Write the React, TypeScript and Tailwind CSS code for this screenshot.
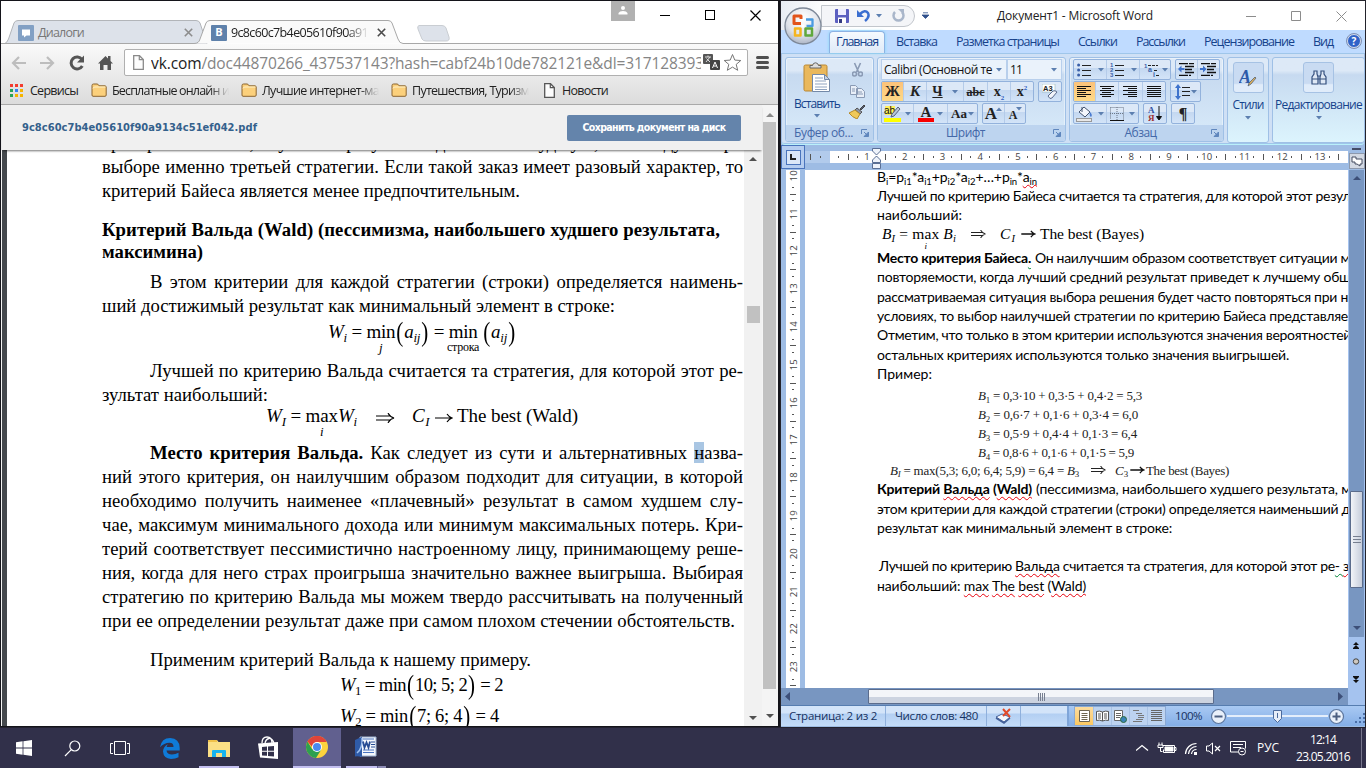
import { useLayoutEffect, useRef, type ReactNode } from "react";

const UI = "font-['Open_Sans','Noto_Sans',sans-serif]";
const SERIF = "font-['Liberation_Serif',serif]";

/** Text whose tracking is computed so that it fills the given width. */
function Fit({ w, className = "", children }: { w: number; className?: string; children: ReactNode }) {
  const ref = useRef<HTMLSpanElement>(null);
  useLayoutEffect(() => {
    const el = ref.current;
    if (!el) return;
    el.style.letterSpacing = "0px";
    const base = el.getBoundingClientRect().width;
    el.style.letterSpacing = "1px";
    const wide = el.getBoundingClientRect().width;
    el.style.letterSpacing = `${((w - base) / (wide - base || 1)).toFixed(4)}px`;
  }, [w]);
  return (
    <span ref={ref} className={`inline-block shrink-0 whitespace-pre ${className}`}>
      {children}
    </span>
  );
}

const I = ({ children }: { children: ReactNode }) => <i className="italic">{children}</i>;
const Sub = ({ children }: { children: ReactNode }) => (
  <span className="relative top-[0.28em] text-[0.68em] leading-none">{children}</span>
);

function Under({ top, children, className = "" }: { top: string; children: ReactNode; className?: string }) {
  return (
    <span className="inline-flex flex-col items-center leading-none">
      <span>{top}</span>
      <span className={`h-0 leading-none ${className}`}>{children}</span>
    </span>
  );
}

const Paren = ({ children }: { children: ReactNode }) => (
  <span className="relative top-[3px] inline-block scale-x-75 text-[28px] leading-none">{children}</span>
);

/* ---------------------------------------------------------------- browser */

function Folder() {
  return (
    <svg width="16" height="14" viewBox="0 0 16 14" className="shrink-0">
      <path d="M1 12V2.5Q1 1 2.5 1H6q1 0 1.5 1l.5.8h6Q15.200 3 15.200 4v8q0 1.300-1.200 1.300H2Q1 13.300 1 12z" fill="#fbd07c" stroke="#8b6531" />
      <path d="M2 5.500Q2 4 4 4h10.500" stroke="#fff1c8" fill="none" />
    </svg>
  );
}

function PageIcon({ className = "" }: { className?: string }) {
  return (
    <svg width="11" height="15" viewBox="0 0 11 15" className={`shrink-0 ${className}`}>
      <path d="M.7.7h5.800l3.800 3.800v9.800H.7z" fill="#fdfdfd" stroke="currentColor" strokeWidth="1.300" />
      <path d="M6.300.7v4h4" fill="none" stroke="currentColor" strokeWidth="1.200" />
    </svg>
  );
}

function Cross({ className }: { className: string }) {
  return (
    <svg width="9" height="9" viewBox="0 0 9 9" className={`shrink-0 ${className}`}>
      <path d="M.8.8l7.400 7.400M8.200.8L.8 8.200" stroke="currentColor" strokeWidth="1.600" />
    </svg>
  );
}

function TabStrip() {
  return (
    <div className="relative flex h-[43px] items-end bg-white">
      <svg className="absolute left-0 top-0" width="777" height="43" viewBox="0 0 777 43">
        <path d="M3 43Q6 42 7.500 38L13 22q1-2.500 4-2.500h178q3 0 4 2.500l7 21z" fill="#dde2ea" stroke="#b2b5b9" />
        <path d="M0 42.500h193Q198 42.500 199 38L205 22q1-2.500 4-2.500h178q3 0 4 2.500l6 16q1.500 4.500 5 4.500h380" fill="#fafafa" stroke="#a8a8a8" />
        <path d="M418 24.500h23q3 0 4 2.500l3 9q1 4-3 4h-20q-3 0-4-2l-4-10q-1-3 1-3.500z" fill="#dde2ea" stroke="#c9cdd2" />
      </svg>
      <div className="relative mb-px flex h-[21px] w-full items-center">
        <svg className="ml-[17px]" width="16" height="16" viewBox="0 0 16 16">
          <rect width="16" height="16" rx="1" fill="#82a0c4" />
          <path d="M4 4.500h8v6H8.500L6 12.500v-2H4z" fill="#fff" />
        </svg>
        <div className="ml-1 flex w-[146px]">
          <Fit w={46} className={`${UI} text-[12.500px] leading-[17px] text-[#777]`}>Диалоги</Fit>
        </div>
        <Cross className="text-[#8c8c8c]" />
        <div className="ml-[18px] flex h-4 w-4 items-center justify-center rounded-[1px] bg-[#5e81ab] font-['Open_Sans',sans-serif] text-[11px] font-bold text-white">В</div>
        <div className="ml-1 flex w-[138px] overflow-hidden [mask-image:linear-gradient(to_right,black_84%,transparent)]">
          <Fit w={137} className={`${UI} text-[12.500px] leading-[17px] text-[#222]`}>9c8c60c7b4e05610f90a91</Fit>
        </div>
        <Cross className="ml-[8px] text-[#4a4a4a]" />
      </div>
      <div className="absolute right-0 top-0 flex h-[29px] items-start">
        <div className="flex h-5 w-6 justify-center bg-[#b1b1b1] pt-[5px]">
          <svg width="10" height="9" viewBox="0 0 10 9" fill="#fff"><circle cx="5" cy="2" r="2" /><path d="M.5 8.500V7Q1.500 5 5 5t4.500 2v1.500z" /></svg>
        </div>
        <svg className="mt-2 ml-[25px] mr-[17px]" width="101" height="13" viewBox="0 0 101 13" fill="none" stroke="#000" shapeRendering="crispEdges">
          <path d="M0 6.500h10M45.500 1.500h9v9h-9z" />
          <path d="M90.500 1.500l10 10M100.500 1.500l-10 10" shapeRendering="auto" strokeWidth="1.200" />
        </svg>
      </div>
    </div>
  );
}

function Toolbar() {
  return (
    <div className="h-[61px] border-b border-[#a9a9a9] bg-linear-to-b from-[#fafafa] to-[#dcdcdc]">
      <div className="flex h-[37px] items-center">
        <svg className="ml-[10px]" width="104" height="18" viewBox="0 0 104 18" fill="none">
          <path d="M15 9H2m6-6L2 9l6 6" stroke="#bdbdbd" strokeWidth="2.200" />
          <path d="M29 9h13m-6-6l6 6-6 6" stroke="#bdbdbd" strokeWidth="2.200" />
          <path d="M71 5.500A6 6 0 1 0 71.300 12" stroke="#555" strokeWidth="3" />
          <path d="M73 1.500v7h-7z" fill="#555" />
          <path d="M87 9.500L94.500 2l2.500 2.500V2h2.500v5l2.500 2.500h-2V16h-3.500v-5h-4v5H89V9.500z" fill="#555" />
        </svg>
        <div className="ml-[9px] flex h-[27px] w-[624px] items-center rounded-[2px] border border-[#b0b0b0] bg-white">
          <PageIcon className="ml-[8px] text-[#8a8a8a]" />
          <div className="ml-[7px] flex w-[550px] overflow-hidden">
            <Fit w={553} className={`${UI} text-[15.500px] leading-[22px] text-[#858585]`}>
              <span className="text-[#222]">vk.com</span>/doc44870266_437537143?hash=cabf24b10de782121e&amp;dl=317128393
            </Fit>
          </div>
          <svg className="ml-[2px] shrink-0" width="17" height="17" viewBox="0 0 17 17">
            <rect width="10" height="10" rx="1" fill="#555" />
            <path d="M2 3h6M5 1.500V3M3 8l4-5M3.500 4.500L7 8" stroke="#ddd" fill="none" />
            <rect x="7" y="6" width="10" height="10" rx="1" fill="#444" />
            <path d="M9.500 14l2.500-6 2.500 6M10.500 12h3" stroke="#fff" fill="none" />
          </svg>
          <svg className="ml-[3px] shrink-0" width="19" height="19" viewBox="0 0 19 19">
            <path d="M9.500 1.500l2.300 5.600 6 .4-4.600 3.900 1.500 5.900-5.200-3.200-5.200 3.200 1.500-5.900L1.200 7.500l6-.4z" fill="#fff" stroke="#777" />
          </svg>
        </div>
        <div className="ml-[8px] flex flex-col gap-[2px]">
          <div className="h-[3px] w-[13px] rounded-sm bg-[#4f4f4f]" />
          <div className="h-[3px] w-[13px] rounded-sm bg-[#4f4f4f]" />
          <div className="h-[3px] w-[13px] rounded-sm bg-[#4f4f4f]" />
        </div>
      </div>
      <div className={`${UI} flex h-[18px] items-center text-[12.500px] leading-[17px] text-[#222]`}>
        <div className="ml-[9px] grid grid-cols-3 gap-[2px]">
          {["bg-[#f33c2f]", "bg-[#f33c2f]", "bg-[#f33c2f]", "bg-[#27a35a]", "bg-[#3384f5]", "bg-[#f5b400]", "bg-[#27a35a]", "bg-[#f5b400]", "bg-[#f5b400]"].map((c, i) => (
            <div key={i} className={`h-[3px] w-[3px] ${c}`} />
          ))}
        </div>
        <Fit w={48} className="ml-[7px] mr-[13px]">Сервисы</Fit>
        {[["Бесплатные онлайн и", 117], ["Лучшие интернет-ма", 117], ["Путешествия, Туризм", 117]].map(([t, w]) => (
          <div key={t} className="flex w-[150px] items-center gap-[5px]">
            <Folder />
            <div className="flex [mask-image:linear-gradient(to_right,black_84%,transparent)]"><Fit w={w as number}>{t}</Fit></div>
          </div>
        ))}
        <PageIcon className="ml-[3px] text-[#555]" />
        <Fit w={46} className="ml-[7px]">Новости</Fit>
      </div>
    </div>
  );
}

function J({ children, indent = false, h = "h-6" }: { children: ReactNode; indent?: boolean; h?: string }) {
  return (
    <div className={`${h} w-[641px] whitespace-nowrap leading-6 [text-align-last:justify] ${indent ? "pl-12" : ""}`}>{children}</div>
  );
}

function PdfPage() {
  return (
    <div className={`${SERIF} -mt-[19px] w-[737px] pl-[95px] text-[18.700px] text-black`}>
      <J>критерию Байеса, лучший результат даст нам худшую, и следует при</J>
      <J>выборе именно третьей стратегии. Если такой заказ имеет разовый характер, то</J>
      <div className="h-6 leading-6"><Fit w={418}>критерий Байеса является менее предпочтительным.</Fit></div>
      <div className="mt-[15px] h-[23px] font-bold leading-[23px]"><Fit w={618}>Критерий Вальда (Wald) (пессимизма, наибольшего худшего результата,</Fit></div>
      <div className="h-[22px] font-bold leading-[22px]"><Fit w={101}>максимина)</Fit></div>
      <div className="h-[7px]" />
      <J indent>В этом критерии для каждой стратегии (строки) определяется наимень-</J>
      <div className="h-6 leading-6"><Fit w={513}>ший достижимый результат как минимальный элемент в строке:</Fit></div>
      <div className="-mt-1 mb-1 h-[41px] pl-[226px] pt-[1px] text-[19px] leading-[26px]">
        <Fit w={188}>
          <I>W</I><Sub><I>i</I></Sub> = <Under top="min" className="text-[13px] italic">j</Under><Paren>(</Paren><I>a</I><Sub><I>ij</I></Sub><Paren>)</Paren> = <Under top="min" className="-mx-1 text-[12px]">строка</Under> <Paren>(</Paren><I>a</I><Sub><I>ij</I></Sub><Paren>)</Paren>
        </Fit>
      </div>
      <J indent>Лучшей по критерию Вальда считается та стратегия, для которой этот ре-</J>
      <div className="h-[23px] leading-6"><Fit w={166}>зультат наибольший:</Fit></div>
      <div className="flex h-[35px] pl-[164px] text-[19px] leading-[20px]">
        <Fit w={91}><I>W</I><Sub><I>I</I></Sub> = <Under top="max" className="text-[13px] italic">i</Under><I>W</I><Sub><I>i</I></Sub></Fit>
        <svg className="ml-[19px] mt-[7px]" width="20" height="10" viewBox="0 0 20 10" fill="none" stroke="#000" strokeWidth="1.100"><path d="M0 3h15M0 7h15M12 0q2 4 6 5-4 1-6 5" /></svg>
        <Fit w={18} className="ml-[16px]"><I>C</I><Sub><I>I</I></Sub></Fit>
        <svg className="ml-[5px] mt-[7px]" width="18" height="10" viewBox="0 0 18 10" fill="none" stroke="#000" strokeWidth="1.200"><path d="M0 5h16M12 1q2 3 5 4-3 1-5 4" /></svg>
        <Fit w={121} className="ml-[4px]">The best (Wald)</Fit>
      </div>
      <J indent><b>Место критерия Вальда.</b> Как следует из сути и альтернативных <span className="bg-[#a9c6e3]">н</span>азва-</J>
      <J>ний этого критерия, он наилучшим образом подходит для ситуации, в которой</J>
      <J>необходимо получить наименее «плачевный» результат в самом худшем слу-</J>
      <J>чае, максимум минимального дохода или минимум максимальных потерь. Кри-</J>
      <J>терий соответствует пессимистично настроенному лицу, принимающему реше-</J>
      <J>ния, когда для него страх проигрыша значительно важнее выигрыша. Выбирая</J>
      <J>стратегию по критерию Вальда мы можем твердо рассчитывать на полученный</J>
      <div className="h-6 leading-6"><Fit w={633}>при ее определении результат даже при самом плохом стечении обстоятельств.</Fit></div>
      <div className="mt-[15px] h-6 pl-12 leading-6"><Fit w={381}>Применим критерий Вальда к нашему примеру.</Fit></div>
      <div className="-mt-1 h-[31px] pl-[238px] text-[18.500px] leading-[26px]">
        <Fit w={163}><I>W</I><Sub>1</Sub> = min<Paren>(</Paren>10; 5; 2<Paren>)</Paren> = 2</Fit>
      </div>
      <div className="h-[26px] pl-[238px] text-[18.500px] leading-[26px]">
        <Fit w={159}><I>W</I><Sub>2</Sub> = min<Paren>(</Paren>7; 6; 4<Paren>)</Paren> = 4</Fit>
      </div>
    </div>
  );
}

const Tri = ({ className }: { className: string }) => (
  <svg width="8" height="4" viewBox="0 0 8 4" className={className}><path d="M0 4l4-4 4 4z" fill="currentColor" /></svg>
);

function Browser() {
  return (
    <div className="flex h-[727px] w-[780px] flex-col border-b border-l border-r-2 border-t border-[#14141a] bg-[#f4f4f4]">
      <TabStrip />
      <Toolbar />
      <div className="ml-px flex h-[621px] shrink-0">
        <div className="w-[760px]">
          <div className="relative flex h-[45px] items-center justify-between bg-[#f0f0f0] pl-5 pr-[21px] shadow-[0_2px_2px_-1px_rgba(0,0,0,0.55)]">
            <Fit w={235} className="mt-[2px] font-['DejaVu_Sans_Condensed','DejaVu_Sans',sans-serif] text-[11px] font-bold text-[#34618c]">9c8c60c7b4e05610f90a9134c51ef042.pdf</Fit>
            <div className="flex h-[26px] w-[174px] items-center justify-center rounded-[2px] bg-[#6484ab]">
              <Fit w={143} className="font-['DejaVu_Sans_Condensed','DejaVu_Sans',sans-serif] text-[10.500px] font-bold text-white">Сохранить документ на диск</Fit>
            </div>
          </div>
          <div className="flex h-[576px] overflow-hidden bg-white">
            <div className="w-[5px] shrink-0 bg-[#45494d]" />
            <div className="h-[576px] overflow-hidden"><PdfPage /></div>
            <div className="flex w-[18px] shrink-0 flex-col items-center bg-[#f1f1f1]">
              <Tri className="mt-[7px] text-[#505050]" />
              <div className="mt-[145px] h-[17px] w-[13px] bg-[#c1c1c1]" />
              <Tri className="mt-auto mb-[6px] rotate-180 text-[#505050]" />
            </div>
          </div>
        </div>
        <div className="ml-[1px] flex w-[13px] flex-col items-center">
          <Tri className="mt-[8px] text-[#8a8a8a]" />
          <div className="mt-[5px] h-[567px] w-[13px] bg-[#c1c1c1]" />
          <Tri className="mt-auto mb-[8px] rotate-180 text-[#505050]" />
        </div>
      </div>
    </div>
  );
}

/* ------------------------------------------------------------------- word */

function Drop({ className = "" }: { className?: string }) {
  return <svg width="6" height="4" viewBox="0 0 6 4" className={`shrink-0 ${className}`}><path d="M0 0h6L3 3.500z" fill="#5c7fb0" /></svg>;
}

function Box({ w, children }: { w: string; children: ReactNode }) {
  return (
    <div className={`flex h-[21px] ${w} overflow-hidden rounded-[2px] border border-[#93b2dc] bg-linear-to-b from-[#dce8f7] from-40% via-[#c3d7f0] via-41% to-[#d3e4f8]`}>{children}</div>
  );
}

function Btn({ w, on = false, children }: { w: string; on?: boolean; children: ReactNode }) {
  return (
    <div className={`flex ${w} shrink-0 items-center justify-center gap-[3px] border-r border-[#b4cbe9] last:border-r-0 ${on ? "bg-linear-to-b from-[#fcc27a] to-[#fdd987]" : ""}`}>{children}</div>
  );
}

function Group({ w, label, labelW, children }: { w: string; label: string; labelW: number; children: ReactNode }) {
  return (
    <div className={`flex h-[85px] ${w} shrink-0 flex-col overflow-hidden rounded-[3px] border border-[#9fc0e6] bg-linear-to-b from-[#dde9f7] from-15% via-[#c7daf0] via-20% to-[#d9ebfa] shadow-[inset_0_0_0_1px_rgba(255,255,255,0.4)]`}>
      <div className="h-[68px]">{children}</div>
      <div className={`${UI} flex h-4 items-center justify-center bg-[#bdd4ef] text-[12px] text-[#4468a8]`}>
        <div className="flex flex-1 justify-center leading-4"><Fit w={labelW}>{label}</Fit></div>
        <svg className="mr-1" width="8" height="8" viewBox="0 0 8 8" fill="none" stroke="#5f86bd"><path d="M.5 5V.5H6M3 3l3 3" /><path d="M7.500 3v4.500H3z" fill="#5f86bd" /></svg>
      </div>
    </div>
  );
}

const glyph = "font-['Liberation_Serif',serif] font-bold leading-none text-[#222]";

function Lines({ kind }: { kind: "left" | "center" | "right" | "full" }) {
  const rows = [14, 9, 14, 9, 14, 9];
  return (
    <svg width="15" height="12" viewBox="0 0 15 12" shapeRendering="crispEdges">
      {rows.map((r, i) => {
        const len = kind === "full" ? 14 : r;
        const start = kind === "center" ? Math.floor((14 - len) / 2) : kind === "right" ? 14 - len : 0;
        return <rect key={i} x={start} y={i * 2} width={len} height="1" fill="#111" />;
      })}
    </svg>
  );
}

function ListIcon({ kind }: { kind: "dots" | "nums" | "tree" }) {
  return (
    <svg width="15" height="14" viewBox="0 0 15 14">
      {kind === "dots" && [2, 7, 12].map((y) => <circle key={y} cx="1.600" cy={y} r="1.500" fill="#3a5fa8" />)}
      {kind === "nums" && [2, 7, 12].map((y, i) => <text key={y} x="0" y={y + 2} fontSize="6" fontWeight="bold" fill="#3a5fa8" fontFamily="Liberation Sans">{i + 1}</text>)}
      {kind !== "tree" && <path d="M5 2.500h9M5 7.500h9M5 12.500h9" stroke="#222" />}
      {kind === "tree" && (
        <>
          <text x="0" y="5" fontSize="6" fontWeight="bold" fill="#3a5fa8" fontFamily="Liberation Sans">1</text>
          <text x="4" y="9" fontSize="7" fontWeight="bold" fill="#3a5fa8" fontFamily="Liberation Sans">a</text>
          <text x="9" y="14" fontSize="7" fontWeight="bold" fill="#3a5fa8" fontFamily="Liberation Sans">i</text>
          <path d="M4 2.500h10M10 7.500h4M12 12.500h3" stroke="#222" strokeDasharray="3 1" />
        </>
      )}
    </svg>
  );
}

function IndentIcon({ right = false }: { right?: boolean }) {
  return (
    <svg width="17" height="13" viewBox="0 0 17 13">
      <path d="M1 .5h15M7 3.500h9M7 6.500h7M7 9.500h9M1 12.500h12" stroke="#111" strokeWidth="1.400" strokeDasharray="9 1" />
      <path d={right ? "M0 5h3V2.500L6.500 6 3 9.500V7H0z" : "M6.500 5h-3V2.500L0 6l3.500 3.500V7h3z"} fill="#3f73cc" />
    </svg>
  );
}

function Ribbon() {
  return (
    <div className="mx-[1px] flex h-[91px] gap-[3px] rounded-b-[3px] border-b border-t border-[#9fc6ea] bg-[#cfe0f5] pl-[3px] pt-[3px] shadow-[0_1px_0_#b9f0fa]">
      <Group w="w-[89px]" label="Буфер об..." labelW={59}>
        <div className="flex justify-between px-[8px] pt-[4px]">
          <div className="flex flex-col items-center">
            <svg width="28" height="31" viewBox="0 0 28 31">
              <rect x="1" y="3" width="23" height="26" rx="1.500" fill="#eab85c" stroke="#b98732" />
              <path d="M7 6V3.500h2.500Q10 .8 12.500 .8T15.500 3.500H18V6z" fill="#ddd" stroke="#666" />
              <path d="M9.500 12.500h12l5 5v12h-17z" fill="#fff" stroke="#7389a8" />
              <path d="M12 16h8M12 19h11M12 22h12M12 25h12M12 27.500h12" stroke="#8fa3c0" />
              <path d="M21.500 12.500v5h5z" fill="#c9d6e8" stroke="#7389a8" />
            </svg>
            <Fit w={46} className={`${UI} mt-[2px] text-[12px] leading-[17px] text-[#15428b]`}>Вставить</Fit>
            <Drop className="mt-[2px]" />
          </div>
          <div className="flex flex-col items-center gap-[7px]">
            <svg width="11" height="16" viewBox="0 0 11 16" fill="none" stroke="#8a9ab4" strokeWidth="1.600"><path d="M2.500 1l4 9M8.500 1l-4 9" /><circle cx="2.500" cy="12" r="2" /><circle cx="8.500" cy="12" r="2" /></svg>
            <svg width="15" height="13" viewBox="0 0 15 13" fill="#e9eff8" stroke="#8a9ab4"><path d="M.5.5h5l2 2v7h-7zM6.500 3.500h5l3 3v6h-8z" /><path d="M8 7h4M8 9h5M2 4h3M2 6h3" /></svg>
            <svg width="16" height="14" viewBox="0 0 16 14"><path d="M15 0l-4 4 1 1 4-4z" fill="#55607a" stroke="#444" /><path d="M8 3l5 4-2 2-5-4z" fill="#8d96a8" stroke="#555" /><path d="M6 5l5 4-3 5Q3 12 0 8z" fill="#f0c95a" stroke="#b58a28" /></svg>
          </div>
        </div>
      </Group>

      <Group w="w-[189px]" label="Шрифт" labelW={39}>
        <div className="flex flex-col gap-[1px] px-[3px] pt-[1px]">
          <div className={`${UI} flex h-[21px] text-[12px] text-[#111]`}>
            <div className="flex w-[126px] items-center justify-between border border-[#b8cfec] bg-[#eaf2fb] pl-[2px] pr-1"><Fit w={108}>Calibri (Основной те</Fit><Drop /></div>
            <div className="flex w-[55px] items-center justify-between border border-[#b8cfec] bg-[#eaf2fb] pl-[2px] pr-1"><Fit w={12}>11</Fit><Drop /></div>
          </div>
          <div className="flex gap-1">
            <Box w="w-[153px]">
              <Btn w="w-[22px]" on><span className={`${glyph} text-[15px]`}>Ж</span></Btn>
              <Btn w="w-[23px]"><span className={`${glyph} text-[15px] italic`}>К</span></Btn>
              <Btn w="w-[37px]"><span className={`${glyph} mr-[6px] text-[14px] underline`}>Ч</span><Drop /></Btn>
              <Btn w="w-[24px]"><span className={`${glyph} text-[12px] line-through`}>abc</span></Btn>
              <Btn w="w-[23px]"><span className={`${glyph} text-[14px]`}>x<span className="relative top-1 text-[7px] text-[#2f5fc0]">2</span></span></Btn>
              <Btn w="w-[22px]"><span className={`${glyph} text-[14px]`}>x<span className="relative -top-[6px] text-[7px] text-[#2f5fc0]">2</span></span></Btn>
            </Box>
            <Box w="w-[24px]">
              <Btn w="w-[22px]">
                <svg width="16" height="16" viewBox="0 0 16 16"><rect x="0" y="0" width="13" height="8" fill="#fff" stroke="#8aa" strokeWidth=".5" /><text x="1" y="7" fontSize="7.500" fontWeight="bold" fontFamily="Liberation Sans" fill="#222">A3</text><path d="M6 12l5-5q2-1 4 1l-5 6q-2 2-4-2z" fill="#f2f4fa" stroke="#5a6b8c" /></svg>
              </Btn>
            </Box>
          </div>
          <div className="flex gap-1">
            <Box w="w-[97px]">
              <Btn w="w-[32px]">
                <svg width="18" height="17" viewBox="0 0 18 17"><rect x="1" y="1" width="10" height="9" fill="#ffef5a" /><text x="0" y="9" fontSize="10" fontFamily="Liberation Sans" fill="#111">ab</text><path d="M14 2l2 2-6 7-3 1 1-3z" fill="#b8c4d8" stroke="#55627a" /><rect x="0" y="13" width="17" height="4" fill="#ffff00" /></svg>
                <Drop />
              </Btn>
              <Btn w="w-[34px]">
                <div className="flex flex-col items-center"><span className={`${glyph} h-[13px] text-[15px] text-[#3c5f9f]`}>A</span><div className="h-1 w-4 bg-[#f80000]" /></div>
                <Drop />
              </Btn>
              <Btn w="w-[29px]"><span className={`${glyph} text-[13px]`}>Aa</span><Drop className="-ml-[2px]" /></Btn>
            </Box>
            <Box w="w-[44px]">
              <Btn w="w-[22px]"><span className={`${glyph} text-[17px]`}>A</span><Drop className="-ml-[4px] -mt-[10px] rotate-180" /></Btn>
              <Btn w="w-[21px]"><span className={`${glyph} mt-[3px] text-[12px]`}>A</span><Drop className="-ml-[4px] -mt-[10px]" /></Btn>
            </Box>
          </div>
        </div>
      </Group>

      <Group w="w-[155px]" label="Абзац" labelW={32}>
        <div className="flex flex-col gap-[1px] px-[3px] pt-[1px]">
          <div className="flex gap-1">
            <Box w="w-[99px]">
              <Btn w="w-[33px]"><ListIcon kind="dots" /><Drop className="ml-[3px]" /></Btn>
              <Btn w="w-[33px]"><ListIcon kind="nums" /><Drop className="ml-[3px]" /></Btn>
              <Btn w="w-[31px]"><ListIcon kind="tree" /><Drop /></Btn>
            </Box>
            <Box w="w-[45px]">
              <Btn w="w-[22px]"><IndentIcon /></Btn>
              <Btn w="w-[21px]"><IndentIcon right /></Btn>
            </Box>
          </div>
          <div className="flex gap-[4px]">
            <Box w="w-[93px]">
              <Btn w="w-[22px]" on><Lines kind="left" /></Btn>
              <Btn w="w-[23px]"><Lines kind="center" /></Btn>
              <Btn w="w-[24px]"><Lines kind="right" /></Btn>
              <Btn w="w-[22px]"><Lines kind="full" /></Btn>
            </Box>
            <Box w="w-[31px]">
              <Btn w="w-[29px]">
                <svg width="15" height="16" viewBox="0 0 15 16"><path d="M3 0l3 4H4v8h2l-3 4-3-4h2V4H0z" fill="#3f73cc" /><path d="M7 3.500h8M7 7.500h8M7 11.500h8" stroke="#222" /></svg>
                <Drop className="-ml-[2px]" />
              </Btn>
            </Box>
          </div>
          <div className="flex gap-[4px]">
            <Box w="w-[66px]">
              <Btn w="w-[33px]">
                <svg width="17" height="16" viewBox="0 0 17 16"><path d="M3 6l5-5 6 5-5 5z" fill="#f4f7fc" stroke="#44546f" /><path d="M14 6q3 3 1 5-2-1-1-5z" fill="#4a7bd0" /><path d="M6 6V1" stroke="#44546f" /><rect x=".5" y="12.500" width="15" height="3" fill="#e8e8e8" stroke="#999" /></svg>
                <Drop className="ml-[2px]" />
              </Btn>
              <Btn w="w-[31px]">
                <svg width="14" height="14" viewBox="0 0 14 14" stroke="#6c7787" fill="none"><path d="M.5.5h13v12M.5.5v12M7 0v13M0 6.500h13" strokeDasharray="1 1" /><path d="M0 13.500h14" stroke="#111" /></svg>
                <Drop className="ml-[2px]" />
              </Btn>
            </Box>
            <Box w="w-[24px]">
              <Btn w="w-[22px]">
                <svg width="15" height="17" viewBox="0 0 15 17"><text x="0" y="8" fontSize="9" fontWeight="bold" fontFamily="Liberation Serif" fill="#2f4fa0">А</text><text x="0" y="16" fontSize="9" fontWeight="bold" fontFamily="Liberation Serif" fill="#a03030">Я</text><path d="M11 1v13M8.500 11.500L11 15l2.500-3.500z" stroke="#111" fill="#111" /></svg>
              </Btn>
            </Box>
            <Box w="w-[24px]"><Btn w="w-[22px]"><span className={`${glyph} text-[16px]`}>¶</span></Btn></Box>
          </div>
        </div>
      </Group>

      {[
        { label: "Стили", w: 31, cls: "w-[42px]", icon: "style" },
        { label: "Редактирование", w: 87, cls: "w-[93px]", icon: "find" },
      ].map((g) => (
        <div key={g.label} className={`flex h-[86px] ${g.cls} shrink-0 flex-col items-center rounded-[3px] border border-[#9fc0e6] bg-linear-to-b from-[#dde9f7] from-15% via-[#c7daf0] via-20% to-[#dcf4fd] pt-[4px]`}>
          <div className="flex h-[31px] w-[31px] items-center justify-center rounded-[3px] border border-[#a6c2e4] bg-linear-to-b from-[#c9dbf2] from-70% to-[#e0ecfa] to-75%">
            {g.icon === "style" ? (
              <svg width="18" height="18" viewBox="0 0 18 18"><text x="0" y="14" fontSize="18" fontStyle="italic" fontWeight="bold" fontFamily="Liberation Serif" fill="#2e5aa8">A</text><path d="M16 8l1 1-5 6-3 2 1-3z" fill="#e0b25a" stroke="#44546f" strokeWidth=".7" /></svg>
            ) : (
              <svg width="16" height="15" viewBox="0 0 16 15" fill="#dfe8f5" stroke="#35507f" strokeWidth="1.200"><path d="M1 14V7l2-3V1h3v3l1 3v7zM15 14V7l-2-3V1h-3v3L9 7v7zM7 6h2M7 9h2M1 9h6M9 9h6" /></svg>
            )}
          </div>
          <Fit w={g.w} className={`${UI} mt-[3px] text-[12px] leading-[17px] text-[#15428b]`}>{g.label}</Fit>
          <Drop className="mt-[3px]" />
        </div>
      ))}
    </div>
  );
}

function WordTop() {
  return (
    <div className="relative">
      <div className="flex h-[29px] items-center bg-linear-to-r from-[#e8edf4] from-0% via-white via-8% to-white">
        <div className="ml-[40px] flex h-[22px] w-[94px] items-center rounded-r-full border border-[#c2c6cc] bg-[#f4f5f8] pl-[13px]">
          <svg width="14" height="14" viewBox="0 0 14 14"><rect width="14" height="14" rx="1" fill="#5b5fc0" /><rect x="3" y="0" width="8" height="6" fill="#eef" /><rect x="3" y="8.500" width="8" height="5.500" fill="#fff" /><rect x="4" y="10" width="3" height="4" fill="#333a80" /></svg>
          <svg className="ml-[8px]" width="13" height="13" viewBox="0 0 13 13" fill="none"><path d="M0 1v7h7z" fill="#3b6fd0" /><path d="M3 5q5-5 8-1 2 4-3 8" stroke="#3b6fd0" strokeWidth="2.500" /></svg>
          <Drop className="ml-[6px]" />
          <svg className="ml-[10px]" width="13" height="13" viewBox="0 0 13 13" fill="none"><path d="M3 3a5 5 0 1 0 7 0" stroke="#a9b6ca" strokeWidth="2.500" /><path d="M6 0h6v6z" fill="#a9b6ca" /></svg>
        </div>
        <svg className="ml-[7px]" width="7" height="7" viewBox="0 0 7 7"><path d="M1 .8h5M0 3h7L3.500 6.500z" fill="#30508c" stroke="#30508c" strokeWidth=".8" /></svg>
        <Fit w={156} className={`${UI} ml-[68px] text-[12px] text-[#222]`}>Документ1 - Microsoft Word</Fit>
        <svg className="ml-[93px]" width="101" height="12" viewBox="0 0 101 12" fill="none" stroke="#8c8c8c"><path d="M0 6.500h10M45.500 1.500h9v9h-9zM90.500 1.500l10 10M100.500 1.500l-10 10" /></svg>
      </div>
      <div className={`${UI} flex h-[23px] items-end bg-[#bfdbff] text-[12.500px] text-[#15428b]`}>
        <div className="ml-[48px] flex h-[22px] w-[56px] items-center justify-center rounded-t-[4px] border border-b-0 border-[#8db2e3] bg-linear-to-b from-[#f5fafe] to-[#dfeaf8] shadow-[0_0_3px_#7fd8f5]"><Fit w={42}>Главная</Fit></div>
        <div className="flex h-[21px] items-center gap-[19px] pl-[11px]">
          <Fit w={41}>Вставка</Fit><Fit w={103}>Разметка страницы</Fit><Fit w={39}>Ссылки</Fit><Fit w={49}>Рассылки</Fit><Fit w={90}>Рецензирование</Fit><Fit w={20}>Вид</Fit>
        </div>
        <div className="mb-[5px] ml-[14px] flex h-[14px] w-[14px] items-center justify-center rounded-full border border-[#d8dde8] bg-[#2f62c8] text-[10px] font-bold leading-none text-white outline outline-[#7d8fb5]">?</div>
      </div>
      <Ribbon />
      <svg className="absolute left-[3px] top-[6px]" width="38" height="38" viewBox="0 0 38 38">
        <defs>
          <radialGradient id="orb" cx=".5" cy=".3" r=".75"><stop offset="0" stopColor="#fff" /><stop offset=".6" stopColor="#dfe3ea" /><stop offset="1" stopColor="#a3adbf" /></radialGradient>
        </defs>
        <circle cx="19" cy="19" r="18" fill="url(#orb)" stroke="#7d8898" strokeWidth="1.300" />
        <g fill="none" strokeLinejoin="round">
          <path d="M17 16.500H10v-7.500h7v3" stroke="#e2541b" strokeWidth="3" />
          <path d="M22 12.500h6.500v6.500h-6" stroke="#4a9be0" strokeWidth="2.300" />
          <path d="M16.500 21.500v7H11v-7z" stroke="#f5b51e" strokeWidth="2.500" />
          <path d="M21.500 21.500H28v7h-6.500z" stroke="#5fa83c" strokeWidth="2.500" />
        </g>
        <path d="M17.500 17.500h3v3h-3z" fill="#fff" />
      </svg>
    </div>
  );
}

const hNums = [1, 2, 3, 4, 5, 6, 7, 8, 9, 10, 11, 12, 13];
const vNums = [10, 11, 12, 13, 14, 15, 16, 17, 18, 19, 20, 21, 22, 23];

const DotH = () => <div className="flex w-[9.450px] shrink-0 justify-center"><div className="h-[2px] w-px bg-[#555]" /></div>;
const TickH = () => <div className="flex w-[9.450px] shrink-0 justify-center"><div className="h-[6px] w-px bg-[#555]" /></div>;

function Ruler() {
  return (
    <div className={`${UI} relative flex h-[25px] bg-[#9ebce4]`}>
      <div className="flex h-[24px] w-[24px] items-center justify-center border border-[#4a74bc] bg-[#b5cdf0]">
        <div className="flex h-[15px] w-[15px] items-center justify-center border border-[#4a74bc] bg-[#dbe7f8]">
          <svg width="6" height="6" viewBox="0 0 6 6"><path d="M1 0v5h5" stroke="#222" strokeWidth="2" fill="none" /></svg>
        </div>
      </div>
      <div className="mt-[6px] flex h-[12px] w-[543px] overflow-hidden">
        <div className="flex w-[25px] shrink-0 items-center bg-[#b2cbec] pl-[1px]"><TickH /><DotH /></div>
        <div className="flex items-center bg-white pl-[4px] text-[9.500px] leading-none text-[#444]">
          <DotH /><TickH /><DotH />
          {hNums.map((n) => (
            <div key={n} className="flex shrink-0 items-center">
              <div className="flex w-[9.450px] justify-center"><span>{n}</span></div>
              <DotH /><TickH /><DotH />
            </div>
          ))}
        </div>
      </div>
      <svg className="absolute left-[91px] top-[3px]" width="10" height="22" viewBox="0 0 10 22" fill="#eef3fb" stroke="#5a6f94"><path d="M.5.500h8v2.500L4.500 7 .5 3zM.5 14.500h8V12L4.500 8 .5 12zM.5 15.500h8v5h-8z" /></svg>
      <div className="flex w-[17px] flex-col items-center">
        <div className="mt-[3px] h-[2px] w-[9px] bg-[#444c66]" />
        <div className="mt-[3px] flex h-[16px] w-[16px] items-center justify-center border border-[#8d99ad] bg-[#d3d9e3]">
          <svg width="12" height="11" viewBox="0 0 12 11" fill="#fff" stroke="#444c60"><path d="M1 1h4v2h6v5H9v2L6 8H4V6H1z" /></svg>
        </div>
      </div>
    </div>
  );
}

const bad = "underline decoration-red-600 decoration-wavy decoration-[0.8px] underline-offset-[2px] [text-decoration-skip-ink:none]";
const gram = "underline decoration-green-700 decoration-wavy decoration-[0.8px] underline-offset-[2px] [text-decoration-skip-ink:none]";

const Row = ({ children, h = "h-[19.300px]" }: { children?: ReactNode; h?: string }) => (
  <div className={`flex ${h} items-center whitespace-pre`}>{children}</div>
);

function ImpliesArrow() {
  return <svg width="16" height="8" viewBox="0 0 20 10" fill="none" stroke="#222" strokeWidth="1.300"><path d="M0 3h15M0 7h15M12 0q2 4 6 5-4 1-6 5" /></svg>;
}
function ToArrow({ className = "" }: { className?: string }) {
  return <svg className={className} width="15" height="8" viewBox="0 0 18 10" fill="none" stroke="#111" strokeWidth="1.600"><path d="M0 5h16M12 1q2 3 5 4-3 1-5 4" /></svg>;
}

function Doc() {
  return (
    <div className="h-[518px] w-[543px] overflow-hidden bg-white">
      <div className="-mt-[3px] pl-[72px] font-['Lato','Open_Sans',sans-serif] text-[14px] leading-[19px] text-black">
        <Row h="h-[19px]"><Fit w={160}>B<Sub>i</Sub>=p<Sub>i1</Sub>*a<Sub>i1</Sub>+p<Sub>i2</Sub>*a<Sub>i2</Sub>+…+p<Sub>in</Sub>*<span className={bad}>a<Sub>in</Sub></span></Fit></Row>
        <Row h="h-[19px]"><Fit w={473}>Лучшей по критерию Байеса считается та стратегия, для которой этот резул</Fit></Row>
        <Row h="h-[18px]"><Fit w={85}>наибольший:</Fit></Row>
        <div className={`${SERIF} mt-px flex h-6 pl-[5px] text-[15.500px] leading-[19px]`}>
          <Fit w={74}><I>B</I><Sub><I>I</I></Sub> = <Under top="max" className="text-[9px] italic">i</Under> <I>B</I><Sub><I>i</I></Sub></Fit>
          <div className="ml-[15px] flex h-[19px] items-center">
            <ImpliesArrow />
            <Fit w={16} className="ml-[13px]"><I>C</I><Sub><I>I</I></Sub></Fit>
            <ToArrow className="ml-[5px]" />
            <Fit w={104} className="ml-[4px]">The best (Bayes)</Fit>
          </div>
        </div>
        <Row><Fit w={154} className="font-bold">Место критерия Байеса<span className={gram}>.</span></Fit><Fit w={315} className="ml-[4px]">Он наилучшим образом соответствует ситуации м</Fit></Row>
        <Row><Fit w={474}>повторяемости, когда лучший средний результат приведет к лучшему общ</Fit></Row>
        <Row><Fit w={471}>рассматриваемая ситуация выбора решения будет часто повторяться при н</Fit></Row>
        <Row><Fit w={471}>условиях, то выбор наилучшей стратегии по критерию Байеса представляе</Fit></Row>
        <Row><Fit w={474}>Отметим, что только в этом критерии используются значения вероятностей</Fit></Row>
        <Row><Fit w={412}>остальных критериях используются только значения выигрышей.</Fit></Row>
        <Row><Fit w={55}>Пример:</Fit></Row>
        <div className={`${SERIF} mt-[3px] text-[13px] leading-[19px] text-[#222]`}>
          <div className="pl-[101px]">
            <Row h="h-[19px]"><Fit w={164}><I>B</I><Sub>1</Sub> = 0,3·10 + 0,3·5 + 0,4·2 = 5,3</Fit></Row>
            <Row h="h-[19px]"><Fit w={160}><I>B</I><Sub>2</Sub> = 0,6·7 + 0,1·6 + 0,3·4 = 6,0</Fit></Row>
            <Row h="h-[19px]"><Fit w={159}><I>B</I><Sub>3</Sub> = 0,5·9 + 0,4·4 + 0,1·3 = 6,4</Fit></Row>
            <Row h="h-[19px]"><Fit w={156}><I>B</I><Sub>4</Sub> = 0,8·6 + 0,1·6 + 0,1·5 = 5,9</Fit></Row>
          </div>
          <div className="-mt-px flex h-[18px] items-center pl-[13px]">
            <Fit w={189}><I>B</I><Sub><I>I</I></Sub> = max(5,3; 6,0; 6,4; 5,9) = 6,4 = <I>B</I><Sub>3</Sub></Fit>
            <div className="ml-[12px]"><ImpliesArrow /></div>
            <Fit w={13} className="ml-[8px]"><I>C</I><Sub>3</Sub></Fit>
            <ToArrow className="ml-[2px]" />
            <Fit w={83} className="ml-[1px]">The best (Bayes)</Fit>
          </div>
        </div>
        <Row><Fit w={155} className="font-bold">Критерий <span className={bad}>Вальда</span> (<span className={bad}>Wald)</span></Fit><Fit w={315} className="ml-[4px]">(пессимизма, наибольшего худшего результата, м</Fit></Row>
        <Row><Fit w={473}>этом критерии для каждой стратегии (строки) определяется наименьший д</Fit></Row>
        <Row><Fit w={295}>результат как минимальный элемент в строке:</Fit></Row>
        <Row />
        <Row><Fit w={470} className="ml-[2px]">Лучшей по критерию <span className={bad}>Вальда</span> считается та стратегия, для которой этот ре<span className={gram}>- </span><span className={bad}>з</span></Fit></Row>
        <Row><Fit w={209}>наибольший: <span className={bad}>max</span> <span className={bad}>The</span> <span className={bad}>best</span> (<span className={bad}>Wald)</span></Fit></Row>
      </div>
    </div>
  );
}

function VRuler() {
  return (
    <div className={`${UI} flex w-[24px] shrink-0 bg-[#9ebce4] pl-[5px]`}>
      <div className="h-[518px] w-[14px] overflow-hidden bg-white text-[9.500px] leading-none text-[#444]">
        <div className="-mt-px flex flex-col items-center">
          {vNums.map((n) => (
            <div key={n} className="flex h-[37.800px] shrink-0 flex-col items-center">
              <div className="flex h-[13px] items-center justify-center"><span className="-rotate-90">{n}</span></div>
              <div className="flex flex-1 flex-col items-center justify-evenly">
                <div className="h-px w-[2px] bg-[#555]" /><div className="h-px w-[6px] bg-[#555]" /><div className="h-px w-[2px] bg-[#555]" />
              </div>
            </div>
          ))}
        </div>
      </div>
    </div>
  );
}

function VScroll() {
  return (
    <div className="flex w-[17px] flex-col bg-[#a5c3ef]">
      <div className="mx-px flex h-[467px] flex-col items-center bg-[#7896c1]">
        <Tri className="mt-[6px] text-[#3d4f78]" />
        <div className="mt-[311px] flex h-[97px] w-[13px] flex-col items-center justify-center gap-[2px] rounded-[1px] border border-[#5b6c8c] bg-linear-to-r from-[#f2f4f8] to-[#c6cddb]">
          <div className="h-px w-2 bg-[#777f90]" /><div className="h-px w-2 bg-[#777f90]" /><div className="h-px w-2 bg-[#777f90]" />
        </div>
        <Tri className="mt-auto mb-[7px] rotate-180 text-[#3d4f78]" />
      </div>
      <svg className="ml-[4px] mt-[5px]" width="8" height="42" viewBox="0 0 8 42"><path d="M4 0l3 3H1zM4 3l3 3H1zM1 6h6v1H1zM1 34h6v1H1zM1 35h6l-3 3zM1 38h6l-3 3z" fill="#111" /><circle cx="4" cy="19.500" r="2.700" fill="#cfc9c0" stroke="#444" /></svg>
    </div>
  );
}

function HScroll() {
  return (
    <div className="flex h-[17px] bg-[#a5c3ef]">
      <div className="flex w-[567px] items-center bg-[#7896c1]">
        <svg className="ml-[4px]" width="5" height="9" viewBox="0 0 5 9"><path d="M5 0v9L0 4.500z" fill="#3d4f78" /></svg>
        <div className="ml-[78px] flex h-[15px] w-[346px] items-center justify-center gap-[1px] rounded-[1px] border border-[#5b6c8c] bg-linear-to-b from-[#f3f5f9] from-50% to-[#ccd3e0] to-55%">
          <div className="h-2 w-px bg-[#777f90]" /><div className="h-2 w-px bg-[#777f90]" /><div className="h-2 w-px bg-[#777f90]" /><div className="h-2 w-px bg-[#777f90]" />
        </div>
        <svg className="ml-auto mr-[5px]" width="5" height="9" viewBox="0 0 5 9"><path d="M0 0v9l5-4.500z" fill="#3d4f78" /></svg>
      </div>
    </div>
  );
}

function Knob({ plus = false }: { plus?: boolean }) {
  return (
    <svg width="17" height="17" viewBox="0 0 17 17" className="shrink-0"><circle cx="8.500" cy="8.500" r="7" fill="#e9f0fa" stroke="#5c769e" strokeWidth="1.200" /><path d={plus ? "M4.500 8.500h8M8.500 4.500v8" : "M4.500 8.500h8"} stroke="#4c5f80" strokeWidth="2" /></svg>
  );
}

function Status() {
  return (
    <div className={`${UI} flex h-[21px] items-stretch border-t border-[#567db0] bg-linear-to-b from-[#d3e4f9] from-35% via-[#b3cff2] via-40% to-[#c4dcf8] text-[11.500px] text-[#15315f]`}>
      <div className="flex w-[105px] items-center border-r border-[#8fb0dc] pl-[8px]"><Fit w={88}>Страница: 2 из 2</Fit></div>
      <div className="flex w-[101px] items-center border-r border-[#8fb0dc] pl-[9px]"><Fit w={83}>Число слов: 480</Fit></div>
      <div className="flex w-[34px] items-center justify-center border-r border-[#8fb0dc]">
        <svg width="17" height="16" viewBox="0 0 17 16"><path d="M1 9l6-3 8 3-6 5z" fill="#f5f7fb" stroke="#44619a" /><path d="M1 10l8 5 6-5" stroke="#44619a" fill="none" strokeWidth="1.500" /><path d="M8 1l7 8M15 1L8 8" stroke="#e04a2a" strokeWidth="2" /></svg>
      </div>
      <div className="w-[48px] border-r-2 border-[#7fa5d8]" />
      <div className="flex flex-1 items-center bg-linear-to-b from-[#a9c9f3] to-[#84aee6]">
        <div className="ml-[5px] flex h-[20px] w-[92px] border border-[#8aa8d3] bg-[#bdd3f0]">
          <div className="flex w-[18px] items-center justify-center bg-linear-to-b from-[#fbdca0] to-[#fcc860]"><svg width="11" height="12" viewBox="0 0 11 12" fill="#fff" stroke="#6d6450"><path d="M.5.5h10v11H.5zM2.500 3.500h6M2.500 5.500h6M2.500 7.500h6M2.500 9.500h6" /></svg></div>
          <div className="flex w-[18px] items-center justify-center border-l border-[#a9c2e4]"><svg width="13" height="12" viewBox="0 0 13 12" fill="#fff" stroke="#555"><path d="M.5 1.500q3-1 6 .5 3-1.500 6-.5v9q-3-1-6 .5-3-1.500-6-.5zM6.500 2v9M2 4h3M2 6h3M2 8h3M8 4h3M8 6h3M8 8h3" /></svg></div>
          <div className="flex w-[18px] items-center justify-center border-l border-[#a9c2e4]"><svg width="13" height="13" viewBox="0 0 13 13"><path d="M.5.5h8v10h-8zM2 3.500h5M2 5.500h5M2 7.500h4" fill="#fff" stroke="#666" /><circle cx="9.500" cy="9.500" r="3" fill="#3a83b8" stroke="#2d6a3a" /></svg></div>
          <div className="flex w-[18px] items-center justify-center border-l border-[#a9c2e4]"><svg width="11" height="12" viewBox="0 0 11 12" stroke="#777"><path d="M0 .5h6M3 3.500h6M5 5.500h6M5 7.500h6M3 9.500h7M0 11.500h9" /></svg></div>
          <div className="flex w-[18px] items-center justify-center border-l border-[#a9c2e4]"><svg width="11" height="12" viewBox="0 0 11 12" stroke="#666"><path d="M0 .5h11M0 2.500h11M0 4.500h11M0 6.500h11M0 8.500h11M0 10.500h11" /></svg></div>
        </div>
        <Fit w={27} className="ml-[9px]">100%</Fit>
        <div className="ml-[8px] flex items-center">
          <Knob />
          <div className="flex h-[2px] w-[101px] items-center justify-center bg-[#e4eefb]">
            <svg width="9" height="13" viewBox="0 0 9 13"><path d="M.5.500h8v8l-4 4-4-4z" fill="#e6edf8" stroke="#4c6a9c" /><path d="M4.500 3v5" stroke="#4c6a9c" /></svg>
          </div>
          <Knob plus />
        </div>
        <svg className="ml-auto mt-[4px]" width="10" height="11" viewBox="0 0 10 11" fill="#4a6fa8"><path d="M8 0h2v2H8zM4 4h2v2H4zM8 4h2v2H8zM0 8h2v2H0zM4 8h2v2H4zM8 8h2v2H8z" /></svg>
      </div>
    </div>
  );
}

function Word() {
  return (
    <div className="flex h-[727px] w-[586px] flex-col border-l border-r border-t border-[#23232b] bg-[#9ebce4]">
      <WordTop />
      <div className="h-px shrink-0" />
      <Ruler />
      <div className="flex h-[518px] shrink-0"><VRuler /><Doc /><VScroll /></div>
      <HScroll />
      <Status />
    </div>
  );
}

/* ---------------------------------------------------------------- taskbar */

function Taskbar() {
  return (
    <div className={`${UI} flex h-[41px] border-t border-[#23222f] bg-[#31304a] text-white`}>
      <div className="flex w-12 items-center justify-center"><svg width="16" height="16" viewBox="0 0 16 16" fill="#fff"><path d="M0 2.200L6.600 1.300v6.300H0zM7.400 1.200L16 0v7.600H7.400zM0 8.400h6.600v6.300L0 13.800zM7.400 8.400H16V16l-8.600-1.200z" /></svg></div>
      <div className="flex w-12 items-center justify-center"><svg width="17" height="17" viewBox="0 0 17 17" fill="none" stroke="#fff" strokeWidth="1.200"><circle cx="10.800" cy="6" r="5" /><path d="M7.300 9.700L1 16" /></svg></div>
      <div className="flex w-12 items-center justify-center"><svg width="20" height="15" viewBox="0 0 20 15" fill="none" stroke="#fff"><path d="M4.500.500h11v13h-11zM3 2.500H.5v10H3M17 2.500h2.500v10H17" /></svg></div>
      <div className="ml-[1px] flex w-[50px] items-center justify-center">
        <svg width="20" height="21" viewBox="0 0 20 21"><path d="M0 9.300Q1.500 0 10.200 0 19.500 .3 19.700 10v2.500H6.500q.5 4 5.500 4 3.500 0 6.500-1.800v4.500Q15.500 21 11 21 3.500 20.500 3 13.500q.2-5 5-7.300Q7 7.300 6.600 9h6.900q.2-4.300-4-4.300Q4 4.700 0 9.300z" fill="#0f7bd8" /></svg>
      </div>
      <div className="ml-[4px] flex w-[40px] flex-col items-center border-b-2 border-[#c3bff0] pt-[11px]">
        <svg width="22" height="19" viewBox="0 0 22 19"><path d="M0 1h9l1.500 2H22v15H0z" fill="#fbdf85" /><path d="M0 1h9v2H0z" fill="#f0c14a" /><path d="M4 18v-6q0-1 1-1h12q1 0 1 1v6h-4v-4H8v4z" fill="#19b4ee" /></svg>
      </div>
      <div className="ml-[4px] flex w-[50px] items-center justify-center"><svg width="22" height="24" viewBox="0 0 22 24"><path d="M5 7q0-6 5-6t5 6M8 7q1-4 4-4.500T17 7" fill="none" stroke="#fff" strokeWidth="1.300" /><path d="M1 7.500L21 6v17L3 21.500z" fill="#fff" /><path d="M5 11l5-.4v4.100H5zM11 10.500l6-.5v4.700h-6zM5 15.700h5v4.100l-5-.4zM11 15.700h6v4.800l-6-.6z" fill="#31304a" /></svg></div>
      <div className="flex w-12 flex-col items-center justify-center border-b-2 border-[#c3bff0] bg-[#61608f]">
        <svg width="22" height="22" viewBox="0 0 22 22"><circle cx="11" cy="11" r="11" fill="#fdd33d" /><path d="M1.500 5.500A11 11 0 0 1 20.500 5.500L11 6z" fill="#e0443a" /><path d="M1.500 5.500A11 11 0 0 0 10 22l5-8-9-1z" fill="#2da04f" /><path d="M1.500 5.500Q5 .5 11 0q6.500 .3 9.500 6H11L7 12z" fill="#e0443a" /><circle cx="11" cy="11" r="5" fill="#fff" /><circle cx="11" cy="11" r="4" fill="#4a8af0" /></svg>
      </div>
      <div className="ml-[5px] flex flex-col">
        <div className="flex h-[38px] w-[40px] items-center justify-center">
          <svg width="24" height="22" viewBox="0 0 24 22"><path d="M6 1h16v19H6z" fill="#f4f7fc" stroke="#9fb3d3" /><path d="M9 14h11M9 16.500h11M9 3h11" stroke="#4a74c0" /><path d="M1 4q6-3 7-3v20q-4-1-7-.5z" fill="#2f5ba8" /><path d="M3 17Q9 12 8 2" stroke="#9fc0ee" fill="none" strokeWidth="1.500" /><path d="M9 5.500l1.500 6 2-5 2 5 1.500-6" fill="none" stroke="#274d94" strokeWidth="1.800" /><path d="M17 6h4M17 8.500h4M17 11h4" stroke="#274d94" /></svg>
        </div>
        <div className="flex h-[2px]"><div className="w-[31px] bg-[#c3bff0]" /><div className="w-px bg-[#61608f]" /><div className="w-[8px] bg-[#8d8bb5]" /></div>
      </div>
      <div className="ml-auto flex items-center">
        <svg width="110" height="16" viewBox="0 0 110 16" fill="none" stroke="#fff">
          <path d="M0 10.500l6-5 6 5" strokeWidth="1.300" />
          <path d="M26.500 5.500h12v7h-11v-3M38.500 7.500h1.500v3h-1.500" /><path d="M29 7h8v4h-8z" fill="#fff" /><path d="M22 5h5v2.500h-5zM23 2.500V5M26 2.500V5M24.500 8v3.500h2" />
          <path d="M49.500 14A11 11 0 0 1 60.500 3.500M52.500 14a8 8 0 0 1 8-7.500M55.500 14a5 5 0 0 1 5-4.500" strokeWidth="1.200" /><path d="M58 12h3v3h-3z" fill="#fff" stroke="none" />
          <path d="M70.500 6v5H73l3.500 3V3L73 6z" /><path d="M79 6l5 5M84 6l-5 5" strokeWidth="1.200" />
          <path d="M103 12h-8.500V1.500h15v7M97 4.500h10M97 7.500h8" /><circle cx="106" cy="11.500" r="3.500" fill="#31304a" /><path d="M104.500 11.500h3" />
        </svg>
        <Fit w={22} className="ml-[11px] text-[12px]">РУС</Fit>
        <div className="ml-[17px] flex w-[54px] flex-col items-center text-[12px] leading-[17px]"><Fit w={26}>12:14</Fit><Fit w={54}>23.05.2016</Fit></div>
        <div className="ml-[11px] mr-[4px] h-10 w-px bg-[#77768c]" />
      </div>
    </div>
  );
}

export default function App() {
  return (
    <div className="flex h-[768px] w-[1366px] flex-col overflow-hidden bg-black">
      <div className="flex h-[727px] shrink-0"><Browser /><Word /></div>
      <Taskbar />
    </div>
  );
}
